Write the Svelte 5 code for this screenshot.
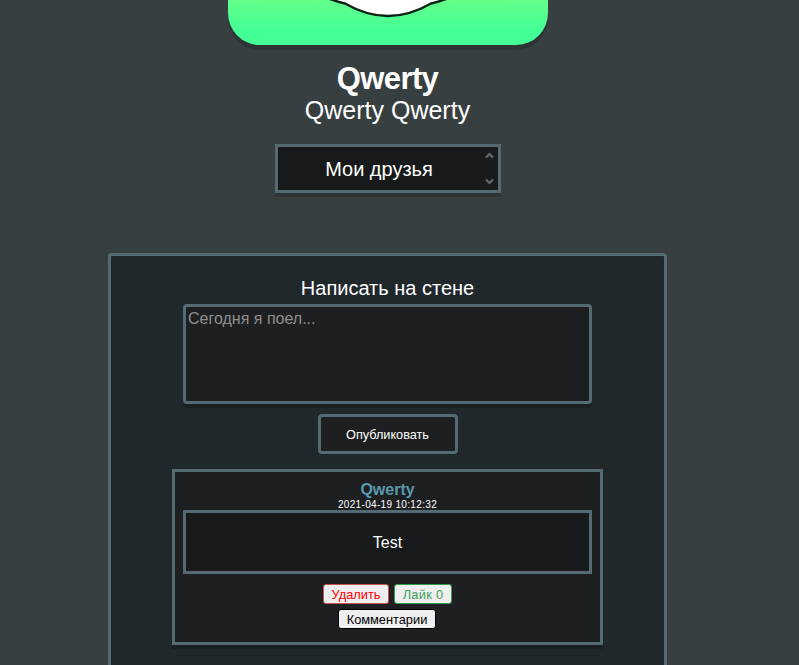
<script>
  let draft = $state('');
  const user = { name: 'Qwerty', full: 'Qwerty Qwerty' };
  const posts = [{ author: 'Qwerty', date: '2021-04-19 10:12:32', text: 'Test', likes: 0 }];
</script>

<main>
  <div class="column">
    <svg class="avatar" width="320" height="45" viewBox="0 0 320 45">
      <defs>
        <linearGradient id="green" x1="0" y1="0" x2="0" y2="1">
          <stop offset="0" stop-color="#64ff8b" />
          <stop offset="0.65" stop-color="#44ff94" />
          <stop offset="1" stop-color="#44ff94" />
        </linearGradient>
      </defs>
      <rect width="320" height="45" fill="url(#green)" />
      <path d="M94 -4Q106 1 117 3.5C130 11 143 16 160 16S190 11 203 3.5Q214 1 226 -4Z" fill="#fff" stroke="#0c2416" stroke-width="2.4" />
    </svg>
    <h1>{user.name}</h1>
    <div class="full">{user.full}</div>

    <div class="friends">
      <span>Мои друзья</span>
      <div class="scroll">
        <svg width="9" height="7" viewBox="0 0 9 7"><path d="M1 5.5L4.5 2L8 5.5" /></svg>
        <svg width="9" height="7" viewBox="0 0 9 7"><path d="M1 1.5L4.5 5L8 1.5" /></svg>
      </div>
    </div>

    <section class="wall">
      <h2>Написать на стене</h2>
      <textarea bind:value={draft} placeholder="Сегодня я поел..."></textarea>
      <button class="publish">Опубликовать</button>
      {#each posts as post}
        <article>
          <div class="author">{post.author}</div>
          <time>{post.date}</time>
          <div class="text">{post.text}</div>
          <div class="actions">
            <button class="small delete">Удалить</button>
            <button class="small like">Лайк {post.likes}</button>
          </div>
          <button class="small comments">Комментарии</button>
        </article>
      {/each}
    </section>
  </div>
</main>

<style>
  :global(body) { background: #383f41; overflow: hidden; }
  main {
    height: 665px;
    overflow: hidden;
    background: #383f41;
    color: #fff;
    font-family: "Liberation Sans", Arial, sans-serif;
  }
  .column {
    width: 775px;
    display: flex;
    flex-direction: column;
    align-items: center;
  }
  .avatar {
    display: block;
    flex: none;
    margin-left: 1px;
    border-radius: 0 0 32px 32px;
    box-shadow: 0 5px 0 #2e3336;
  }
  h1 { margin: 16px 0 -1px; font-size: 31px; line-height: 36px; letter-spacing: -0.6px; }
  .full { font-size: 25px; line-height: 28px; }
  .friends {
    box-sizing: border-box;
    flex: none;
    width: 226px;
    height: 49px;
    margin: 20px 0 0 1px;
    border: 3px solid #546b74;
    background: #18191a;
    box-shadow: 0 4px 0 #2e3336;
    display: flex;
    align-items: center;
    font-size: 20px;
  }
  .friends span { flex: 1; text-align: center; padding-top: 2px; padding-right: 1px; }
  .scroll {
    width: 17px;
    height: 43px;
    box-sizing: border-box;
    padding: 5px 0;
    background: #1a1b1c;
    display: flex;
    flex-direction: column;
    align-items: center;
    justify-content: space-between;
  }
  .scroll path { fill: none; stroke: #68686a; stroke-width: 2.2; }
  .wall {
    box-sizing: border-box;
    flex: none;
    width: 559px;
    height: 460px;
    margin-top: 60px;
    padding-top: 20px;
    border: 3px solid #546b74;
    border-radius: 4px;
    background: #21282b;
    display: flex;
    flex-direction: column;
    align-items: center;
  }
  h2 { margin: 0; font-size: 20px; font-weight: 400; line-height: 24px; }
  textarea {
    box-sizing: border-box;
    display: block;
    width: 409px;
    height: 100px;
    margin: 4px 0 10px;
    padding: 3px 2px 2px;
    border: 3px solid #546b74;
    border-radius: 4px;
    background: #1e1f21;
    box-shadow: 0 4px 0 #1b2022;
    color: #fff;
    font: 16px/18px "Liberation Sans", Arial, sans-serif;
    resize: none;
    outline: none;
  }
  textarea::placeholder { color: #8f8f90; opacity: 1; }
  button { box-sizing: border-box; font-family: inherit; margin: 0; padding: 0; white-space: nowrap; }
  .publish {
    width: 140px;
    height: 40px;
    margin-left: 1px;
    padding: 1px 1px 0 0;
    border: 3px solid #546b74;
    border-radius: 4px;
    background: #1e1f21;
    color: #fff;
    font-size: 12.7px;
  }
  article {
    box-sizing: border-box;
    width: 431px;
    height: 176px;
    margin-top: 15px;
    padding-top: 9px;
    border: 3px solid #546b74;
    background: #1e1f21;
    box-shadow: 0 4px 0 #1b2022;
    display: flex;
    flex-direction: column;
    align-items: center;
  }
  .author { font-size: 16px; line-height: 18px; font-weight: 700; color: #5b98ad; }
  time { height: 11px; font-size: 10px; line-height: 12px; letter-spacing: 0.33px; }
  .text {
    box-sizing: border-box;
    width: 409px;
    height: 64px;
    border: 3px solid #546b74;
    background: #18191a;
    font-size: 16px;
    line-height: 60px;
    text-align: center;
  }
  .actions { display: flex; gap: 5px; margin: 10px 0 5px; }
  .small {
    height: 20px;
    padding-top: 1px;
    border: 1px solid;
    border-radius: 3px;
    background: #efefef;
    font-size: 12.8px;
    line-height: 17px;
  }
  .delete { width: 66px; color: #ff0000; border-color: #c75450; }
  .like { width: 58px; color: #3fa35c; border-color: #2f9e4c; letter-spacing: 0.3px; }
  .comments { width: 98px; margin-right: 1px; color: #000; border-color: #000; }
</style>
